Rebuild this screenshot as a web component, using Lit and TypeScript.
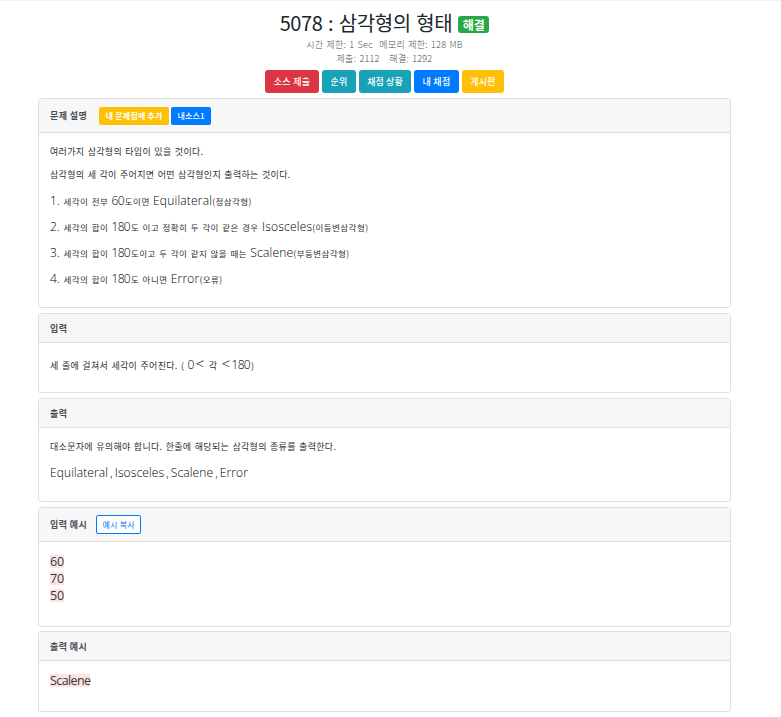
import { LitElement, html, css } from "lit";
import { customElement } from "lit/decorators.js";

@customElement("app-root")
export class AppRoot extends LitElement {
  static styles = css`
    :host { display: block; font-family: "Open Sans", "Noto Sans CJK KR", sans-serif; color: #212529; background: #fff; height: 717px; overflow: hidden; border-top: 1px solid #f2f2f2; box-sizing: border-box; }
    * { box-sizing: border-box; }
    .top { text-align: center; display: flex; flex-direction: column; align-items: center; padding: 9px 12px 0 0; }
    h1 { margin: 0; font-size: 20px; font-weight: 400; line-height: 26px; display: flex; align-items: center; gap: 6px; font-family: "Noto Sans CJK KR", sans-serif; color: #212529; letter-spacing: -.4px; word-spacing: 1.5px; }
    .badge { background: #28a745; color: #fff; font-size: 12px; font-weight: 700; line-height: 17px; height: 17px; width: 31px; text-align: center; border-radius: 3px; position: relative; top: 1px; letter-spacing: 0; }
    .meta { font-size: 9px; line-height: 14px; color: #495057; word-spacing: 1px; letter-spacing: .25px; font-weight: 300; font-family: "Noto Sans CJK KR", sans-serif; }
    .meta.first { margin-top: 2px; }
    .btns { display: flex; gap: 3px; margin-top: 4px; margin-bottom: 5px; }
    .btn { height: 23px; border-radius: 3px; color: #fff; font-size: 9px; font-weight: 500; line-height: 23px; text-align: center; font-family: "Noto Sans CJK KR", sans-serif; letter-spacing: .3px; white-space: nowrap; }
    .red { background: #dc3545; width: 54px; }
    .teal { background: #17a2b8; width: 34px; }
    .teal.w { width: 52px; }
    .blue { background: #007bff; width: 45px; }
    .yellow { background: #ffc107; width: 42px; }
    .cards { display: flex; flex-direction: column; gap: 5px; margin: 0 50px 0 38px; }
    .card { border: 1px solid #dfdfdf; border-radius: 3px; background: #fff; }
    .head { background: #f7f7f7; border-bottom: 1px solid #dfdfdf; padding: 0 11px; display: flex; align-items: center; font-size: 9px; font-weight: 700; color: #495057; font-family: "Noto Sans CJK KR", sans-serif; letter-spacing: .4px; height: 29px; }
    .head.tall { height: 34px; }
    .mini { height: 18px; line-height: 18px; font-size: 8px; padding: 0; border-radius: 2px; color: #fff; font-weight: 700; text-align: center; letter-spacing: .2px; }
    .mini.y { background: #ffc107; margin-left: 12px; margin-right: 2px; width: 70px; }
    .mini.b { background: #007bff; font-weight: 500; width: 40px; }
    .mini.o { border: 1px solid #007bff; color: #007bff; background: #fff; font-weight: 400; margin-left: 9px; line-height: 17px; height: 19px; width: 45px; }
    .body { padding: 0 11px; font-family: "Noto Sans CJK KR", sans-serif; font-size: 9px; color: #2b3035; letter-spacing: .3px; word-spacing: 1px; }
    .body p { margin: 0; white-space: nowrap; }
    .body p.n { font-size: 8.5px; letter-spacing: .45px; }
    .l { font-family: "Open Sans", sans-serif; font-weight: 300; font-size: 12px; letter-spacing: .2px; word-spacing: -1.2px; color: #000; }
    .d { letter-spacing: -.7px; margin-right: 1px; }
    .a { font-size: 15px; margin: 0 1px; }
    .w { letter-spacing: .1px; }
    .sample { font-family: "Open Sans", sans-serif; font-size: 12.5px; line-height: 17px; color: #343a40; letter-spacing: -.15px; }
    .sample mark { display: inline-block; background: #fde4e2; color: #343a40; line-height: 13px; height: 13px; vertical-align: baseline; }
    .sample.s { letter-spacing: -.6px; }
    .c1 { height: 210px; } .c2 { height: 80px; } .c3 { height: 104px; } .c4 { height: 120px; } .c5 { height: 81px; }
    .c4 { margin-bottom: -1px; }
    .c1 .body p:nth-child(1) { margin-top: 12px; line-height: 13px; }
    .c1 .body p:nth-child(2) { margin-top: 10px; line-height: 13px; }
    .c1 .body p.n { margin-top: 9px; height: 17px; line-height: 17px; }
    .c1 .body p.n.f { margin-top: 11px; }
    .c2 .body p { margin-top: 12px; line-height: 17px; }
    .c3 .body p:nth-child(1) { margin-top: 12px; line-height: 13px; }
    .c3 .body p:nth-child(2) { margin-top: 11px; line-height: 17px; }
    .c4 .sample { margin-top: 11px; }
    .c5 .sample { margin-top: 11px; }
  `;

  render() {
    const l = (s: string) => html`<span class="l">${s}</span>`;
    const d = (s: string) => html`<span class="l d">${s}</span>`;
    const a = html`<span class="l a">&lt;</span>`;
    return html`
      <div class="top">
        <h1>5078 : 삼각형의 형태 <span class="badge">해결</span></h1>
        <div class="meta first">시간 제한: 1 Sec&nbsp; 메모리 제한: 128 MB</div>
        <div class="meta">제출: 2112&nbsp;&nbsp; 해결: 1292</div>
        <div class="btns">
          <span class="btn red">소스 제출</span>
          <span class="btn teal">순위</span>
          <span class="btn teal w">채점 상황</span>
          <span class="btn blue">내 채점</span>
          <span class="btn yellow">게시판</span>
        </div>
      </div>
      <div class="cards">
        <section class="card c1">
          <div class="head tall">문제 설명<span class="mini y">내 문제집에 추가</span><span class="mini b">내소스1</span></div>
          <div class="body">
            <p>여러가지 삼각형의 타입이 있을 것이다.</p>
            <p>삼각형의 세 각이 주어지면 어떤 삼각형인지 출력하는 것이다.</p>
            <p class="n f">${l("1.")} 세각이 전부 ${d("60")}도이면 ${l("Equilateral")}(정삼각형)</p>
            <p class="n">${l("2.")} 세각의 합이 ${d("180")}도 이고 정확히 두 각이 같은 경우 ${l("Isosceles")}(이등변삼각형)</p>
            <p class="n">${l("3.")} 세각의 합이 ${d("180")}도이고 두 각이 같지 않을 때는 ${l("Scalene")}(부등변삼각형)</p>
            <p class="n">${l("4.")} 세각의 합이 ${d("180")}도 아니면 ${l("Error")}(오류)</p>
          </div>
        </section>
        <section class="card c2">
          <div class="head">입력</div>
          <div class="body"><p>세 줄에 걸쳐서 세각이 주어진다. ( ${d("0")}${a} 각 ${a}${d("180")})</p></div>
        </section>
        <section class="card c3">
          <div class="head">출력</div>
          <div class="body">
            <p>대소문자에 유의해야 합니다. 한줄에 해당되는 삼각형의 종류를 출력한다.</p>
            <p><span class="l w">Equilateral , Isosceles , Scalene , Error</span></p>
          </div>
        </section>
        <section class="card c4">
          <div class="head tall">입력 예시<span class="mini o">예시 복사</span></div>
          <div class="body"><div class="sample"><mark>60</mark><br /><mark>70</mark><br /><mark>50</mark></div></div>
        </section>
        <section class="card c5">
          <div class="head">출력 예시</div>
          <div class="body"><div class="sample s"><mark>Scalene</mark></div></div>
        </section>
      </div>
    `;
  }
}
